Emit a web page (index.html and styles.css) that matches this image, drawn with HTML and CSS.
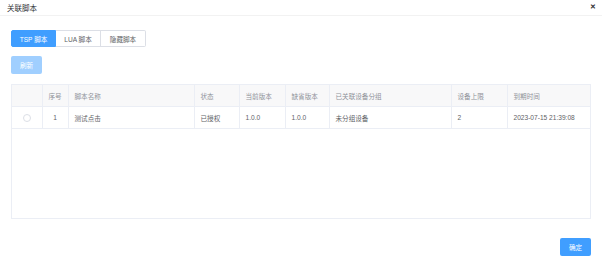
FILE: index.html
```html
<!DOCTYPE html>
<html lang="zh-CN">

<head>
  <meta charset="UTF-8">
  <title>关联脚本</title>
  <link rel="stylesheet" href="styles.css">
</head>

<body>
  <div class="dialog">
    <div class="dialog-header">
      <span class="dialog-title">关联脚本</span>
      <span class="dialog-close">✕</span>
    </div>

    <div class="dialog-body">
      <div class="tabs">
        <span class="tab active">TSP 脚本</span>
        <span class="tab">LUA 脚本</span>
        <span class="tab">隐藏脚本</span>
      </div>

      <button class="btn btn-disabled">刷新</button>

      <div class="table-wrap">
        <table>
          <colgroup>
            <col style="width: 30px">
            <col style="width: 26px">
            <col style="width: 126px">
            <col style="width: 45px">
            <col style="width: 46px">
            <col style="width: 44px">
            <col style="width: 122px">
            <col style="width: 56px">
            <col>
          </colgroup>
          <thead>
            <tr>
              <th></th>
              <th class="center">序号</th>
              <th>脚本名称</th>
              <th>状态</th>
              <th>当前版本</th>
              <th>缺省版本</th>
              <th>已关联设备分组</th>
              <th>设备上限</th>
              <th>到期时间</th>
            </tr>
          </thead>
          <tbody>
            <tr>
              <td class="center"><span class="radio"></span></td>
              <td class="center">1</td>
              <td>测试点击</td>
              <td>已授权</td>
              <td>1.0.0</td>
              <td>1.0.0</td>
              <td>未分组设备</td>
              <td>2</td>
              <td>2023-07-15 21:39:08</td>
            </tr>
          </tbody>
        </table>
      </div>
    </div>

    <div class="dialog-footer">
      <button class="btn btn-primary">确定</button>
    </div>
  </div>
</body>

</html>
```

FILE: styles.css
```css
body {
  margin: 0;
  background-color: #ffffff;
  font-family: "Liberation Sans", "Noto Sans CJK SC", sans-serif;
  color: #606266;
}

.dialog {
  width: 602px;
  height: 257px;
}

.dialog-header {
  height: 13px;
  padding: 2px 6px 0 7px;
  border-bottom: 1px solid #f2f2f2;
  display: flex;
  align-items: center;
  justify-content: space-between;
}

.dialog-title {
  font-size: 7.5px;
  color: #303133;
  line-height: 12px;
}

.dialog-close {
  font-size: 7px;
  color: #303133;
  font-weight: bold;
  margin-top: -3px;
}

.dialog-body {
  padding: 14px 11px 0 11px;
}

.tabs {
  display: flex;
}

.tab {
  width: 45px;
  height: 17px;
  box-sizing: border-box;
  border: 1px solid #dcdfe6;
  border-left: none;
  display: flex;
  align-items: center;
  justify-content: center;
  font-size: 6.6px;
  color: #606266;
}

.tab:first-child {
  border-left: 1px solid #dcdfe6;
  border-radius: 2px 0 0 2px;
}

.tab:last-child {
  border-radius: 0 2px 2px 0;
}

.tab.active {
  background-color: #409eff;
  border-color: #409eff;
  color: #ffffff;
}

.btn {
  border: none;
  border-radius: 2px;
  color: #ffffff;
  font-family: inherit;
  font-size: 6.6px;
  padding: 0;
  width: 31px;
  height: 18px;
}

.btn-disabled {
  margin-top: 9px;
  background-color: #a0cfff;
}

.btn-primary {
  background-color: #409eff;
}

.table-wrap {
  margin-top: 10px;
  width: 580px;
  height: 135px;
  box-sizing: border-box;
  border: 1px solid #ebeef5;
}

table {
  width: 100%;
  border-collapse: collapse;
  table-layout: fixed;
}

th, td {
  text-align: left;
  padding: 0 6px;
  font-size: 6.6px;
  font-weight: normal;
  border-right: 1px solid #ebeef5;
  border-bottom: 1px solid #ebeef5;
  white-space: nowrap;
}

th:last-child,
td:last-child {
  border-right: none;
}

th {
  height: 21px;
  background-color: #f8f8f9;
  color: #909399;
}

td {
  height: 21px;
  color: #606266;
}

.center {
  text-align: center;
}

.radio {
  display: inline-block;
  width: 6px;
  height: 6px;
  border: 1px solid #dcdfe6;
  border-radius: 50%;
  vertical-align: middle;
}

.dialog-footer {
  display: flex;
  justify-content: flex-end;
  padding: 19px 11px 0 0;
}
```
